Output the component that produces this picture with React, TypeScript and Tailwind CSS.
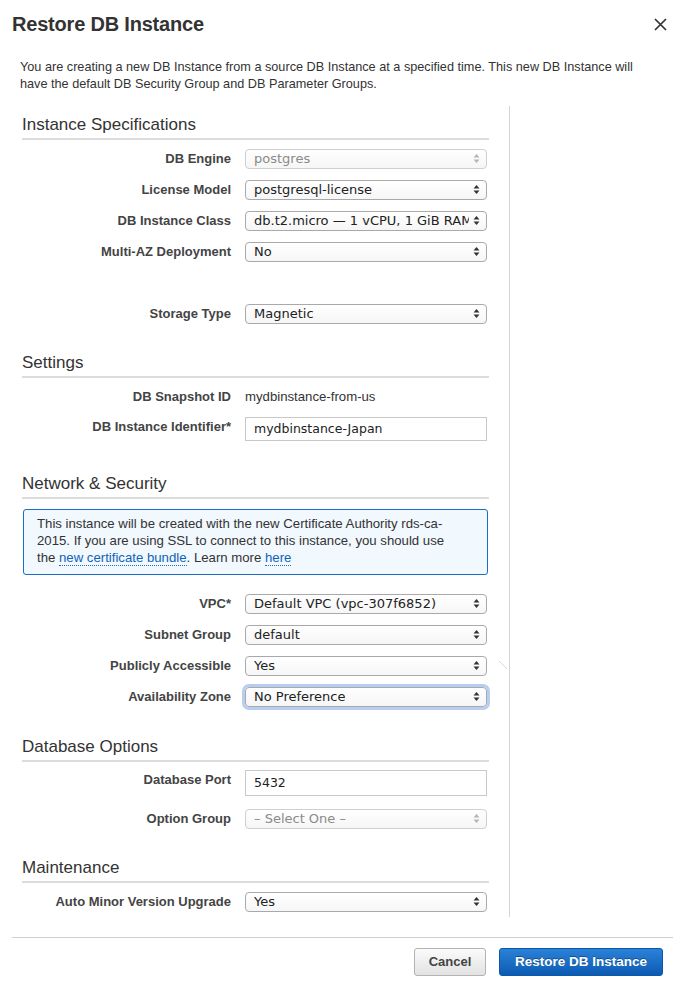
import React from 'react';

const sans = 'font-["Liberation_Sans",Arial,sans-serif]';
const ui = 'font-["DejaVu_Sans","Liberation_Sans",sans-serif]';

function Arrows({ dim }: { dim?: boolean }) {
  const c = dim ? '#b5b5b5' : '#333';
  return (
    <svg width="7" height="11" viewBox="0 0 7 11" className="shrink-0">
      <path d="M3.5 1 L6.5 4.5 L0.5 4.5 Z" fill={c} />
      <path d="M3.5 10 L6.5 6.5 L0.5 6.5 Z" fill={c} />
    </svg>
  );
}

function Select({ value, disabled, focused }: { value: string; disabled?: boolean; focused?: boolean }) {
  return (
    <div
      className={`flex h-[20px] w-[242px] items-center justify-between gap-[4px] rounded-[4px] border bg-gradient-to-b from-white to-[#f6f6f6] pl-[8px] pr-[6px] text-[13px] ${ui} ${
        disabled ? 'border-[#cfcfcf] text-[#8a8a8a]' : 'border-[#a9a9a9] text-[#222]'
      } ${focused ? 'border-[#6f9fdc] shadow-[0_0_0_3px_rgba(120,165,230,0.55)]' : ''}`}
    >
      <span className="min-w-0 overflow-hidden whitespace-nowrap leading-[17px]">{value}</span>
      <Arrows dim={disabled} />
    </div>
  );
}

function Input({ value, h }: { value: string; h: string }) {
  return (
    <div className={`flex w-[242px] items-center border border-[#c9c9c9] bg-white pl-[8px] text-[12.5px] text-[#222] ${ui} ${h}`}>
      {value}
    </div>
  );
}

function Label({ children }: { children: React.ReactNode }) {
  return <div className="w-[209px] shrink-0 text-right text-[13px] font-bold text-[#444]">{children}</div>;
}

function Row({ label, children }: { label: string; children: React.ReactNode }) {
  return (
    <div className="flex h-[31px] items-center gap-[14px]">
      <Label>{label}</Label>
      {children}
    </div>
  );
}

function Section({ title, mt }: { title: string; mt: string }) {
  return (
    <div className={`${mt} mb-[3px] border-b-2 border-[#dcdcdc] pb-[3px] text-[17px] leading-[20px] text-[#333]`}>{title}</div>
  );
}

export default function App() {
  return (
    <div className={`h-[988px] w-[673px] overflow-hidden bg-white ${sans}`}>
      <div className="flex h-[48px] items-center justify-between pl-[12px] pr-[5px]">
        <h1 className="text-[20px] font-bold tracking-[-0.2px] text-[#333]">Restore DB Instance</h1>
        <svg width="13" height="13" viewBox="0 0 13 13" className="mr-[1px]">
          <path d="M1 1 L12 12 M12 1 L1 12" stroke="#333" strokeWidth="1.7" />
        </svg>
      </div>

      <p className="mt-[11px] px-[20px] text-[12.7px] leading-[17px] text-[#333]">
        You are creating a new DB Instance from a source DB Instance at a specified time. This new DB Instance will
        have the default DB Security Group and DB Parameter Groups.
      </p>

      <div className="relative mt-[13px] w-[510px] border-r border-[#d4d4d4] pl-[22px] pr-[20px]">
        <Section title="Instance Specifications" mt="pt-[9px]" />
        <Row label="DB Engine">
          <Select value="postgres" disabled />
        </Row>
        <Row label="License Model">
          <Select value="postgresql-license" />
        </Row>
        <Row label="DB Instance Class">
          <Select value="db.t2.micro — 1 vCPU, 1 GiB RAM" />
        </Row>
        <Row label="Multi-AZ Deployment">
          <Select value="No" />
        </Row>
        <div className="h-[31px]" />
        <Row label="Storage Type">
          <Select value="Magnetic" />
        </Row>

        <Section title="Settings" mt="mt-[24px]" />
        <Row label="DB Snapshot ID">
          <span className="text-[13.2px] text-[#333]">mydbinstance-from-us</span>
        </Row>
        <div className="flex h-[32px] items-start gap-[14px] pt-[5px]">
          <Label>DB Instance Identifier*</Label>
          <Input value="mydbinstance-Japan" h="h-[24px]" />
        </div>

        <Section title="Network &amp; Security" mt="mt-[30px]" />
        <div className="mx-[1px] mt-[10px] rounded-[3px] border border-[#1a6fc4] bg-[#f1f8fe] pb-[8px] pl-[13px] pr-[6px] pt-[5px] text-[13.2px] leading-[17px] text-[#333]">
          This instance will be created with the new Certificate Authority rds-ca-
          <br />
          2015. If you are using SSL to connect to this instance, you should use
          <br />
          the <span className="border-b border-dotted border-[#1a6fc4] text-[#0f63b8]">new certificate bundle</span>.
          Learn more <span className="border-b border-dotted border-[#1a6fc4] text-[#0f63b8]">here</span>
        </div>
        <div className="mt-[13px]">
          <Row label="VPC*">
            <Select value="Default VPC (vpc-307f6852)" />
          </Row>
          <Row label="Subnet Group">
            <Select value="default" />
          </Row>
          <Row label="Publicly Accessible">
            <Select value="Yes" />
          </Row>
          <Row label="Availability Zone">
            <Select value="No Preference" focused />
          </Row>
        </div>

        <Section title="Database Options" mt="mt-[25px]" />
        <div className="flex h-[38px] items-start gap-[14px] pt-[5px]">
          <Label>Database Port</Label>
          <Input value="5432" h="h-[26px]" />
        </div>
        <Row label="Option Group">
          <Select value="– Select One –" disabled />
        </Row>

        <Section title="Maintenance" mt="mt-[24px]" />
        <Row label="Auto Minor Version Upgrade">
          <Select value="Yes" />
        </Row>

        <svg width="10" height="10" viewBox="0 0 10 10" className="absolute left-[498px] top-[554px]">
          <path d="M1 1 L9 9" stroke="#d8d8d8" strokeWidth="1" />
        </svg>
      </div>

      <div className="ml-[12px] mt-[20px] flex justify-end gap-[13px] border-t border-[#cfcfcf] pr-[10px] pt-[10px]">
        <button className="h-[28px] w-[72px] rounded-[3px] border border-[#b3b3b3] bg-gradient-to-b from-[#fbfbfb] to-[#e2e2e2] text-[13px] font-bold text-[#444]">
          Cancel
        </button>
        <button className="h-[28px] w-[164px] rounded-[3px] border border-[#0b57a8] bg-gradient-to-b from-[#2a82d8] to-[#0c5bb2] text-[13.5px] font-bold text-white [text-shadow:0_-1px_0_rgba(0,0,0,0.35)]">
          Restore DB Instance
        </button>
      </div>
    </div>
  );
}
